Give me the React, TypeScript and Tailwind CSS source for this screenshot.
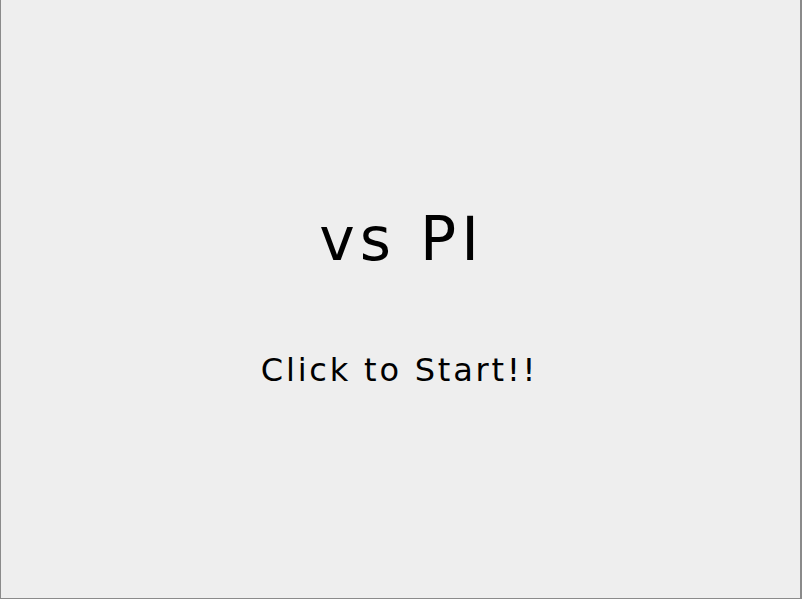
import React from 'react';

export default function App() {
  return (
    <div className="w-[802px] h-[599px] bg-[#eeeeee] border-l border-r-2 border-b border-[#8a8a8a] flex flex-col items-center pt-[199px] select-none cursor-pointer" style={{ fontFamily: '"DejaVu Sans", Verdana, sans-serif' }}>
      <h1 className="text-[60px] leading-[80px] text-black tracking-[5px] pl-[2px]">vs PI</h1>
      <p className="mt-[71px] text-[32px] leading-[40px] text-black tracking-[2.8px] pr-[2px]">Click to Start!!</p>
    </div>
  );
}
